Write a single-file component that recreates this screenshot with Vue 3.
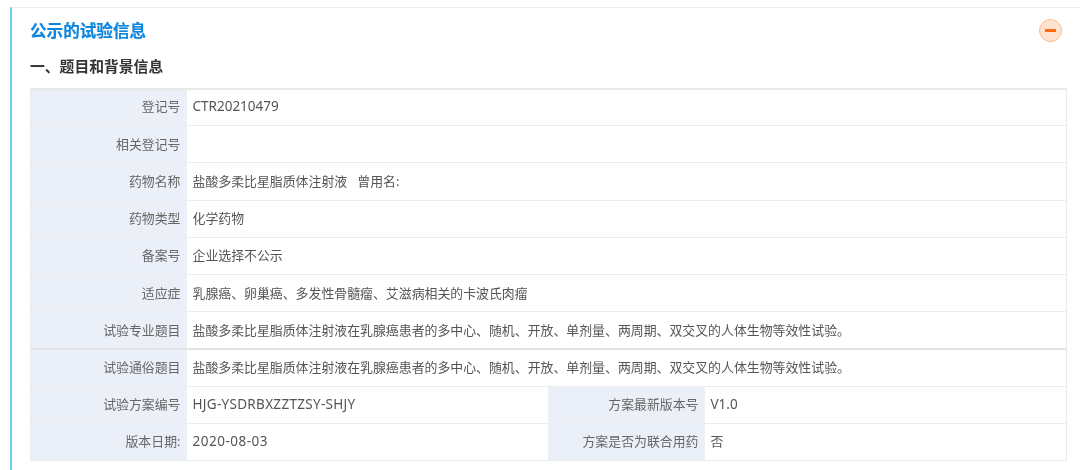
<script setup>
const rows = [
  { label: '登记号', value: 'CTR20210479', latin: 'lat' },
  { label: '相关登记号', value: '' },
  { label: '药物名称', value: '盐酸多柔比星脂质体注射液\u00a0\u00a0\u00a0曾用名:' },
  { label: '药物类型', value: '化学药物' },
  { label: '备案号', value: '企业选择不公示' },
  { label: '适应症', value: '乳腺癌、卵巢癌、多发性骨髓瘤、艾滋病相关的卡波氏肉瘤' },
  { label: '试验专业题目', value: '盐酸多柔比星脂质体注射液在乳腺癌患者的多中心、随机、开放、单剂量、两周期、双交叉的人体生物等效性试验。', strong: true },
  { label: '试验通俗题目', value: '盐酸多柔比星脂质体注射液在乳腺癌患者的多中心、随机、开放、单剂量、两周期、双交叉的人体生物等效性试验。' },
  { label: '试验方案编号', value: 'HJG-YSDRBXZZTZSY-SHJY', latin: 'lat code', label2: '方案最新版本号', value2: 'V1.0', latin2: 'lat' },
  { label: '版本日期:', value: '2020-08-03', latin: 'lat date', label2: '方案是否为联合用药', value2: '否' }
]
</script>

<template>
  <div class="page">
    <section class="panel">
      <header class="head">
        <h1 class="title">公示的试验信息</h1>
        <span class="toggle"><span class="minus"></span></span>
      </header>
      <h2 class="sub">一、题目和背景信息</h2>
      <table class="info">
        <colgroup>
          <col class="c1" />
          <col class="c2" />
          <col class="c3" />
          <col />
        </colgroup>
        <tbody>
          <tr v-for="r in rows" :key="r.label" :class="{ strong: r.strong }">
            <th>{{ r.label }}</th>
            <td :colspan="r.label2 ? 1 : 3" :class="r.latin">{{ r.value }}</td>
            <template v-if="r.label2">
              <th>{{ r.label2 }}</th>
              <td :class="r.latin2">{{ r.value2 }}</td>
            </template>
          </tr>
        </tbody>
      </table>
    </section>
  </div>
</template>

<style>
html, body { margin: 0; background: #fff; overflow: hidden; }
</style>

<style scoped>
.page {
  width: 1080px;
  height: 470px;
  padding: 7px 0 0 10px;
  box-sizing: border-box;
  overflow: hidden;
  font-family: "Noto Sans", "Noto Sans CJK SC", sans-serif;
  filter: blur(0.4px);
}
.panel {
  height: 463px;
  box-sizing: border-box;
  border-left: 2px solid #6ccbee;
  border-top: 1px solid #ededed;
  padding: 0 13px 0 18px;
}
.head {
  display: flex;
  justify-content: space-between;
  align-items: center;
  height: 46px;
}
.title {
  margin: 0;
  font-size: 16.6px;
  line-height: 46px;
  font-weight: 700;
  color: #0f86dd;
  -webkit-text-stroke: 0.2px #0f86dd;
}
.toggle {
  display: flex;
  align-items: center;
  justify-content: center;
  width: 23px;
  height: 23px;
  margin: -2px 5px 0 0;
  border: 1px solid #ffb98c;
  border-radius: 50%;
  background: #ffe3d1;
  box-sizing: border-box;
}
.minus {
  width: 11px;
  height: 3px;
  background: #ff6a0d;
}
.sub {
  margin: 0;
  height: 33.5px;
  font-size: 14.8px;
  line-height: 24px;
  font-weight: 700;
  color: #333;
}
.info {
  width: 1037px;
  height: 373px;
  table-layout: fixed;
  border-collapse: collapse;
  border: 1px solid #ececec;
  border-top: 2px solid #e8e8e8;
  font-size: 12.9px;
  color: #555;
}
.c1 { width: 156px; }
.c2 { width: 361px; }
.c3 { width: 157px; }
tr { height: 37.2px; }
th, td {
  border-bottom: 1px solid #ececec;
  white-space: nowrap;
  font-weight: 400;
  line-height: 1;
}
td {
  padding: 0 5px 0 6px;
  text-align: left;
}
th {
  padding: 0 6px 0 5px;
  text-align: right;
  background: #ebeff8;
  color: #666;
}
tr:first-child th, tr:first-child td { padding-bottom: 2px; }
.lat { font-size: 13.5px; }
.code { letter-spacing: 0.3px; }
.date { letter-spacing: 0.5px; }
.strong th, .strong td { border-bottom: 2px solid #e4e4e4; }
</style>
